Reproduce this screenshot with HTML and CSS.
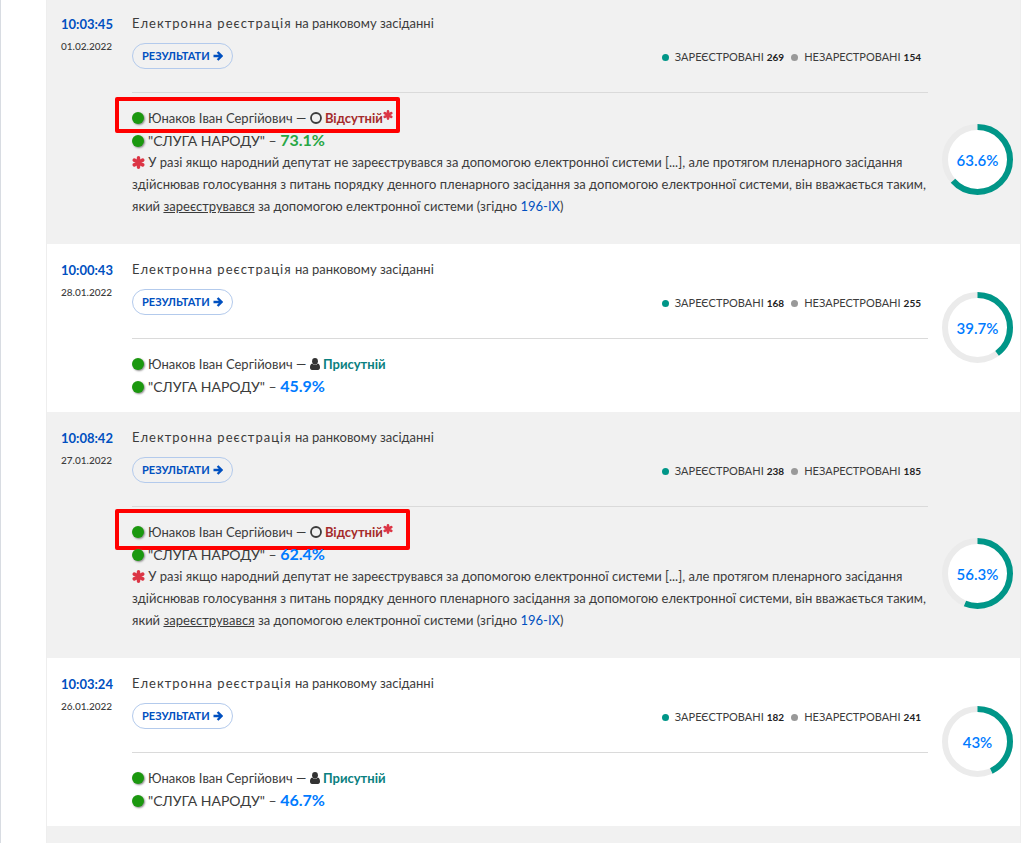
FILE: index.html
```
<!DOCTYPE html>
<html lang="uk">
<head>
  <meta charset="UTF-8" />
  <title>Електронна реєстрація</title>
  <meta name="viewport" content="width=device-width, initial-scale=1" />
  <link rel="stylesheet" href="styles.css">
</head>
<body>
  <!-- Icons -->
  <svg class="sprite" aria-hidden="true">
    <symbol id="arrow" viewBox="0 0 10 10">
      <path d="M0.5 5H8M4.6 1L8.6 5L4.6 9" fill="none" stroke="currentColor" stroke-width="2.4" />
    </symbol>
    <symbol id="user" viewBox="0 0 10 12">
      <ellipse cx="5" cy="3.2" rx="2.9" ry="3.2" />
      <path d="M2.2 5.6C0.6 6 0 7.6 0 9.6C0 11.2 0.8 12 2 12H8C9.2 12 10 11.2 10 9.6C10 7.6 9.4 6 7.8 5.6C6.4 7.2 3.6 7.2 2.2 5.6Z" />
    </symbol>
    <symbol id="ring" viewBox="0 0 12 12">
      <circle cx="6" cy="6" r="5" fill="none" stroke="currentColor" stroke-width="1.8" />
    </symbol>
    <symbol id="asterisk" viewBox="0 0 12 12">
      <path d="M6 1.7V10.3M2.1 3.8L9.9 8.2M9.9 3.8L2.1 8.2" fill="none" stroke="currentColor" stroke-width="3.2" stroke-linecap="round" />
    </symbol>
  </svg>

  <main class="page">
    <ul class="list">
      <li class="item">
        <div class="when"><a class="time" href="#">10:03:45</a><span class="date">01.02.2022</span></div>
        <div class="content">
          <h3 class="title"><span class="wide">Електронна реєстрація</span> на ранковому засіданні</h3>
          <div class="bar">
            <a class="btn" href="#">РЕЗУЛЬТАТИ <svg class="arrow"><use href="#arrow" /></svg></a>
            <div class="legend">
              <span class="yes">ЗАРЕЄСТРОВАНІ <b>269</b></span>
              <span class="no">НЕЗАРЕСТРОВАНІ <b>154</b></span>
            </div>
          </div>
          <div class="votes">
            <p class="vote"><i class="dot"></i>Юнаков Іван Сергійович — <svg class="ring"><use href="#ring" /></svg> <b class="absent">Відсутній</b><svg class="star sup"><use href="#asterisk" /></svg><span class="mark"></span></p>
            <p class="vote faction"><i class="dot"></i>"СЛУГА НАРОДУ" – <b class="pct high">73.1%</b></p>
            <p class="note"><svg class="star"><use href="#asterisk" /></svg> У разі якщо народний депутат не зареєструвався за допомогою електронної системи [...], але протягом пленарного засідання<br>здійснював голосування з питань порядку денного пленарного засідання за допомогою електронної системи, він вважається таким,<br>який <u>зареєструвався</u> за допомогою електронної системи (згідно <a href="#">196-IX</a>)</p>
          </div>
        </div>
        <div class="chart">
          <svg viewBox="0 0 71 71"><circle class="track" cx="35.5" cy="35.5" r="32.5" /><circle class="value" cx="35.5" cy="35.5" r="32.5" pathLength="100" stroke-dasharray="63.6 100" /></svg>
          <span>63.6%</span>
        </div>
      </li>

      <li class="item">
        <div class="when"><a class="time" href="#">10:00:43</a><span class="date">28.01.2022</span></div>
        <div class="content">
          <h3 class="title"><span class="wide">Електронна реєстрація</span> на ранковому засіданні</h3>
          <div class="bar">
            <a class="btn" href="#">РЕЗУЛЬТАТИ <svg class="arrow"><use href="#arrow" /></svg></a>
            <div class="legend">
              <span class="yes">ЗАРЕЄСТРОВАНІ <b>168</b></span>
              <span class="no">НЕЗАРЕСТРОВАНІ <b>255</b></span>
            </div>
          </div>
          <div class="votes">
            <p class="vote"><i class="dot"></i>Юнаков Іван Сергійович — <svg class="user"><use href="#user" /></svg> <b class="present">Присутній</b></p>
            <p class="vote faction"><i class="dot"></i>"СЛУГА НАРОДУ" – <b class="pct">45.9%</b></p>
          </div>
        </div>
        <div class="chart">
          <svg viewBox="0 0 71 71"><circle class="track" cx="35.5" cy="35.5" r="32.5" /><circle class="value" cx="35.5" cy="35.5" r="32.5" pathLength="100" stroke-dasharray="39.7 100" /></svg>
          <span>39.7%</span>
        </div>
      </li>

      <li class="item">
        <div class="when"><a class="time" href="#">10:08:42</a><span class="date">27.01.2022</span></div>
        <div class="content">
          <h3 class="title"><span class="wide">Електронна реєстрація</span> на ранковому засіданні</h3>
          <div class="bar">
            <a class="btn" href="#">РЕЗУЛЬТАТИ <svg class="arrow"><use href="#arrow" /></svg></a>
            <div class="legend">
              <span class="yes">ЗАРЕЄСТРОВАНІ <b>238</b></span>
              <span class="no">НЕЗАРЕСТРОВАНІ <b>185</b></span>
            </div>
          </div>
          <div class="votes">
            <p class="vote"><i class="dot"></i>Юнаков Іван Сергійович — <svg class="ring"><use href="#ring" /></svg> <b class="absent">Відсутній</b><svg class="star sup"><use href="#asterisk" /></svg><span class="mark mark-big"></span></p>
            <p class="vote faction"><i class="dot"></i>"СЛУГА НАРОДУ" – <b class="pct">62.4%</b></p>
            <p class="note"><svg class="star"><use href="#asterisk" /></svg> У разі якщо народний депутат не зареєструвався за допомогою електронної системи [...], але протягом пленарного засідання<br>здійснював голосування з питань порядку денного пленарного засідання за допомогою електронної системи, він вважається таким,<br>який <u>зареєструвався</u> за допомогою електронної системи (згідно <a href="#">196-IX</a>)</p>
          </div>
        </div>
        <div class="chart">
          <svg viewBox="0 0 71 71"><circle class="track" cx="35.5" cy="35.5" r="32.5" /><circle class="value" cx="35.5" cy="35.5" r="32.5" pathLength="100" stroke-dasharray="56.3 100" /></svg>
          <span>56.3%</span>
        </div>
      </li>

      <li class="item">
        <div class="when"><a class="time" href="#">10:03:24</a><span class="date">26.01.2022</span></div>
        <div class="content">
          <h3 class="title"><span class="wide">Електронна реєстрація</span> на ранковому засіданні</h3>
          <div class="bar">
            <a class="btn" href="#">РЕЗУЛЬТАТИ <svg class="arrow"><use href="#arrow" /></svg></a>
            <div class="legend">
              <span class="yes">ЗАРЕЄСТРОВАНІ <b>182</b></span>
              <span class="no">НЕЗАРЕСТРОВАНІ <b>241</b></span>
            </div>
          </div>
          <div class="votes">
            <p class="vote"><i class="dot"></i>Юнаков Іван Сергійович — <svg class="user"><use href="#user" /></svg> <b class="present">Присутній</b></p>
            <p class="vote faction"><i class="dot"></i>"СЛУГА НАРОДУ" – <b class="pct">46.7%</b></p>
          </div>
        </div>
        <div class="chart">
          <svg viewBox="0 0 71 71"><circle class="track" cx="35.5" cy="35.5" r="32.5" /><circle class="value" cx="35.5" cy="35.5" r="32.5" pathLength="100" stroke-dasharray="43 100" /></svg>
          <span>43%</span>
        </div>
      </li>

      <li class="item rest"></li>
    </ul>
  </main>
</body>
</html>
```
FILE: styles.css
```
* { box-sizing: border-box; }

body {
  margin: 0;
  background: #fff; color: #3c3c3c;
  font-family: Lato, "Open Sans", sans-serif;
  font-size: 13px; line-height: 22px;
}

a { color: #0050c0; text-decoration: none; }
p, h3 { margin: 0; font-weight: 400; }

.sprite { position: absolute; width: 0; height: 0; }

.page {
  display: flex;
  min-height: 100vh;
  padding: 0 8px 0 45px;
  border-left: 1px solid #d8dce2;
}

.list {
  display: flex; flex-direction: column; flex: 1;
  list-style: none; margin: -2px 0 0; padding: 0;
  border: solid #eee; border-width: 0 1px;
}

.item {
  display: flex;
  min-height: 168px;
  padding: 14px 7px 15px 14px;
}
.item:nth-child(odd) { background: #f1f1f1; }
.rest { flex: 1; min-height: 0; padding: 0; }

.when {
  display: flex; flex-direction: column;
  flex: 0 0 71px;
}
.time { font-size: 13px; font-weight: 700; line-height: 24px; }
.date { font-size: 10px; font-weight: 500; line-height: 20px; }

.content { flex: 1; min-width: 0; }

.title { font-size: 13px; }
.wide { letter-spacing: 1px; }

.bar {
  display: flex; justify-content: space-between; align-items: flex-start;
  height: 59px; padding: 9px 7px 0 0;
  border-bottom: 1px solid #dadada;
}

.btn {
  display: flex; align-items: center; gap: 3px;
  height: 26px; padding: 0 9px;
  border: 1px solid #b3caec; border-radius: 13px;
  font-size: 11px; font-weight: 700;
}

.legend {
  display: flex; gap: 7px;
  padding-top: 3px;
  font-size: 11px;
}
.legend b { font-size: 10px; color: #222; }
.legend span { display: flex; align-items: center; gap: 3px; }
.legend span::before {
  content: ''; width: 7px; height: 7px; margin-right: 3px;
  border-radius: 50%; background: #999;
}
.legend .yes::before { background: #009688; }

.votes { padding-top: 14px; }
.vote { position: relative; height: 22px; }
.faction { font-size: 14px; }

.dot {
  display: inline-block; width: 12px; height: 12px; margin-right: 4px;
  border-radius: 50%; background: #1b980f;
  box-shadow: 1px 1px 2px #888;
  vertical-align: -1px;
}

.absent { color: #a52a2a; }
.present { color: #0a8080; }
.pct { font-size: 16px; color: #007bff; }
.high { color: #28a745; }

.arrow, .user { width: 10px; height: 10px; }
.user { height: 12px; fill: #333; vertical-align: -1px; }
.ring { width: 12px; height: 12px; vertical-align: -1px; }
.star { width: 13px; height: 13px; color: #dc3545; vertical-align: -2px; }
.sup { width: 10px; height: 10px; vertical-align: 3px; }

.note { padding-bottom: 12px; white-space: nowrap; }

/* red frame over the absent deputy */
.mark {
  position: absolute; top: -10px; left: -17px;
  width: 285px; height: 36px;
  border: 4px solid #f00; border-radius: 2px;
}
.mark-big { top: -12px; width: 295px; height: 41px; }

.chart {
  position: relative; align-self: flex-end;
  flex: none; width: 71px; height: 71px;
  margin: 0 0 34px 14px;
}
.chart svg { display: block; transform: rotate(-90deg); }
.chart circle { fill: #fff; stroke: #ebebeb; stroke-width: 6; }
.chart .value { fill: none; stroke: #009688; }
.chart span {
  position: absolute; inset: 0;
  display: flex; align-items: center; justify-content: center;
  font-size: 15px; font-weight: 600; color: #007bff;
}
```
